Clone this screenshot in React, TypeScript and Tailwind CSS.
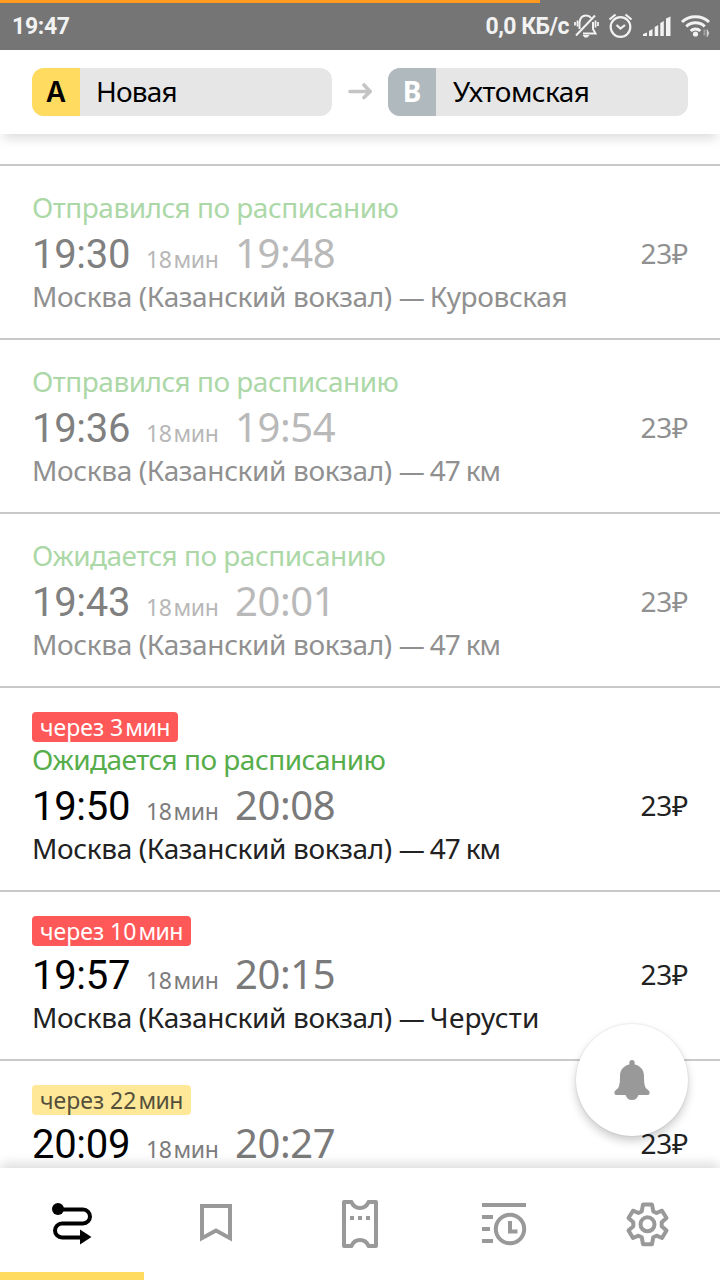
type Trip = {
  departure: string;
  arrival: string;
  from: string;
  to: string;
  toClass?: string;
  status?: string;
  minutesLeft?: number;
  urgent?: boolean;
  gone?: boolean;
};

const trips: Trip[] = [
  {
    departure: "19:30",
    arrival: "19:48",
    from: "Москва (Казанский вокзал)",
    to: "Куровская",
    status: "Отправился по расписанию",
    gone: true,
  },
  {
    departure: "19:36",
    arrival: "19:54",
    from: "Москва (Казанский вокзал)",
    to: "47 км",
    toClass: "tracking-[-1.1px]",
    status: "Отправился по расписанию",
    gone: true,
  },
  {
    departure: "19:43",
    arrival: "20:01",
    from: "Москва (Казанский вокзал)",
    to: "47 км",
    toClass: "tracking-[-1.1px]",
    status: "Ожидается по расписанию",
    gone: true,
  },
  {
    departure: "19:50",
    arrival: "20:08",
    from: "Москва (Казанский вокзал)",
    to: "47 км",
    toClass: "tracking-[-1.1px]",
    status: "Ожидается по расписанию",
    minutesLeft: 3,
    urgent: true,
  },
  {
    departure: "19:57",
    arrival: "20:15",
    from: "Москва (Казанский вокзал)",
    to: "Черусти",
    toClass: "tracking-[0.25px]",
    minutesLeft: 10,
    urgent: true,
  },
  {
    departure: "20:09",
    arrival: "20:27",
    from: "",
    to: "",
    minutesLeft: 22,
  },
];

function StatusBar() {
  return (
    <div className="relative flex h-[50px] shrink-0 items-center bg-[#757575] pl-3 pr-[9px] pt-[2px] font-['Roboto',sans-serif] text-[23px] font-bold text-[#f2f2f2]">
      <div className="absolute left-0 top-0 h-[3px] w-[540px] bg-[#ff9a1f]" />
      <span className="grow pt-[2px] tracking-[-0.3px]">19:47</span>
      <span className="pt-[2px] tracking-[-0.5px]">0,0 КБ/с</span>
      <svg className="ml-[5px] h-[26px] w-[26px] shrink-0" viewBox="0 0 26 26" fill="none" stroke="currentColor" strokeWidth="2">
        <path d="M5.500 16V9.500C6 5 8.500 2.500 12 2.500c2.200 0 4 .9 5.200 2.500M19 9v7l2.500 4.500H9" />
        <path d="M2 22.500 21 2.500" />
        <path d="M3.500 7.500v6M1 9v3.500M21.500 7.500v7M24 9v4" strokeWidth="1.800" />
        <path d="M8.500 22h7l-2 2.500h-3z" fill="currentColor" stroke="none" />
      </svg>
      <svg className="ml-2 h-[26px] w-[26px] shrink-0" viewBox="0 0 26 26" fill="none" stroke="currentColor" strokeWidth="2.200">
        <circle cx="12.500" cy="14" r="9.800" />
        <path d="m8.500 12 4 3.600 4.500-3.600M1.500 6.500 7.500 1.500M23.500 6.500l-6-5" />
      </svg>
      <svg className="ml-[9px] h-[22px] w-[29px] shrink-0" viewBox="0 0 29 22" fill="currentColor">
        <path d="M0 21v-2l4-1.500V21zM6 21v-5l3.500-2v7zM11.700 21v-9l3.500-2v11zM17.300 21V8l3.500-2v15zM23 21V3.500l4.500-2V21z" />
      </svg>
      <svg className="ml-[9px] h-[24px] w-[30px] shrink-0" viewBox="0 0 30 24" fill="none" stroke="currentColor" strokeWidth="3">
        <path d="M1 8c7-7 20-7 27 0M5.300 12.500c5-5 13.400-5 18.400 0M9.700 17c2.700-2.600 6.900-2.600 9.600 0" />
        <circle cx="14.500" cy="20" r="2.600" fill="currentColor" stroke="none" />
        <path d="M23.500 15.500v6" strokeWidth="2" opacity=".35" />
        <path d="M26 15.500v7.500l2-4z" fill="currentColor" strokeWidth=".5" opacity=".8" />
      </svg>
    </div>
  );
}

function Header() {
  return (
    <header className="z-10 flex h-[84px] shrink-0 items-center bg-white px-8 text-[28px] text-black shadow-[0_8px_10px_-3px_rgba(0,0,0,0.13)]">
      <div className="flex h-12 w-[300px] overflow-hidden rounded-[12px] bg-[#e6e6e6]">
        <div className="w-12 bg-[#ffdc5f] text-center font-['Inter',sans-serif] font-semibold leading-[49px]">A</div>
        <span className="pl-4 leading-[46px] tracking-[-0.8px]">Новая</span>
      </div>
      <svg className="mx-4 h-6 w-6" viewBox="0 0 24 24" fill="none" stroke="#c4c4c4" strokeWidth="3.600" strokeLinecap="round" strokeLinejoin="round">
        <path d="M2 11.500h20M16 5l6.200 6.500L16 17.500" />
      </svg>
      <div className="flex h-12 w-[300px] overflow-hidden rounded-[12px] bg-[#e6e6e6]">
        <div className="w-12 bg-[#afb9be] text-center font-bold leading-[46px] text-white">B</div>
        <span className="pl-[17px] leading-[46px] tracking-[-0.55px]">Ухтомская</span>
      </div>
    </header>
  );
}

function TripRow({ trip }: { trip: Trip }) {
  return (
    <li className={`border-t-2 border-[#c9c9c9] px-8 pb-6 pt-6 ${trip.gone ? "text-[#909090]" : "text-[#222]"}`}>
      {trip.minutesLeft && (
        <div className={`flex h-[30px] w-fit items-center whitespace-pre rounded-[4px] px-2 text-[23px] ${trip.urgent ? "bg-[#ff5858] text-white" : "bg-[#ffe999] text-[#55503c]"}`}>
          через {trip.minutesLeft}
          <span className="ml-[2px] tracking-[-0.5px]">мин</span>
        </div>
      )}
      {trip.status && (
        <p className={`h-[35px] text-[28px] leading-[35px] tracking-[-0.5px] ${trip.gone ? "text-[#acd8a7]" : "text-[#57ad4b]"}`}>{trip.status}</p>
      )}
      <div className="mt-[3px] flex h-[50px] items-baseline leading-[50px]">
        <span className={`w-[114px] font-['Roboto',sans-serif] text-[40px] tracking-[-0.3px] ${trip.gone ? "text-[#808080]" : "text-black"}`}>{trip.departure}</span>
        <span className={`w-[89px] text-[23px] tracking-[-0.4px] ${trip.gone ? "text-[#b7b7b7]" : "text-[#7c7c7c]"}`}>
          18<span className="ml-[2px]">мин</span>
        </span>
        <span className={`grow text-[40px] tracking-[-0.4px] ${trip.gone ? "text-[#b9b9b9]" : "text-[#7a7a7a]"}`}>{trip.arrival}</span>
        <span className="self-center text-[28px] tracking-[-0.3px]">23₽</span>
      </div>
      {trip.to && (
        <p className="h-9 whitespace-nowrap text-[28px] leading-9 tracking-[-0.37px]">
          {trip.from} <span className="text-[26px] tracking-[-1.800px]">—</span> <span className={trip.toClass}>{trip.to}</span>
        </p>
      )}
    </li>
  );
}

function TabBar() {
  return (
    <nav className="z-10 grid h-[112px] shrink-0 grid-cols-5 bg-white text-[#999] shadow-[0_-6px_10px_-1px_rgba(0,0,0,0.13)]">
      <button className="flex items-center justify-center border-b-8 border-[#ffdc5f] pt-2 text-black">
        <svg className="h-12 w-12" viewBox="0 0 48 48" fill="none" stroke="currentColor" strokeWidth="4">
          <path d="M10 9.500h25a7 7 0 0 1 0 14H14a7 7 0 0 0 0 14h20" />
          <circle cx="10" cy="9" r="6" fill="currentColor" stroke="none" />
          <path d="M32 29.500v15L43.500 37z" fill="currentColor" stroke="none" />
        </svg>
      </button>
      <button className="flex items-center justify-center">
        <svg className="h-12 w-12" viewBox="0 0 48 48" fill="none" stroke="currentColor" strokeWidth="4">
          <path d="M10 6h28v32.200L24 30.500 10 38.200z" />
        </svg>
      </button>
      <button className="flex items-center justify-center">
        <svg className="h-12 w-12" viewBox="0 0 48 48" fill="none" stroke="currentColor" strokeWidth="4" strokeLinejoin="round">
          <path d="M8 2h7.500c1.500 4 4.500 6 8.500 6s7-2 8.500-6H40v44h-7.500c-1.500-4-4.500-6-8.500-6s-7 2-8.500 6H8z" />
          <path d="M14 18h4M22 18h4M30 18h4" />
        </svg>
      </button>
      <button className="flex items-center justify-center">
        <svg className="h-12 w-12" viewBox="0 0 48 48" fill="none" stroke="currentColor" strokeWidth="4">
          <path d="M2 5h44M2 17h11M2 29h8M2 41h11" />
          <circle cx="30" cy="29" r="14.200" />
          <path d="M30 21v10.500h7.500" />
        </svg>
      </button>
      <button className="flex items-center justify-center">
        <svg className="h-12 w-12" viewBox="0 0 48 48" fill="none" stroke="currentColor" strokeWidth="4" strokeLinejoin="round">
          <path d="M19 4.500h9l1.300 7 3.200 1.500 5.500-2.300 4.500 7.300-4.800 4.300v4L42.500 30.500 38 38l-5.500-2.300-3.200 1.500-1.300 7h-9l-1.300-7-3.200-1.500L9 38 4.500 30.500l4.800-4.200v-4L4.500 18 9 10.700l5.500 2.300 3.200-1.500z" />
          <circle cx="23.500" cy="24.300" r="7" />
        </svg>
      </button>
    </nav>
  );
}

export default function App() {
  return (
    <div className="relative flex h-[1280px] w-[720px] flex-col overflow-hidden bg-white font-['Noto_Sans',sans-serif]">
      <StatusBar />
      <Header />
      <ul className="min-h-0 grow overflow-hidden pt-[30px]">
        {trips.map((trip) => (
          <TripRow key={trip.departure} trip={trip} />
        ))}
      </ul>
      <button className="absolute bottom-[144px] right-8 flex h-28 w-28 items-center justify-center rounded-full bg-white text-[#999] shadow-[0_5px_10px_rgba(0,0,0,0.2),0_0_2px_rgba(0,0,0,0.15)]">
        <svg className="h-10 w-9" viewBox="0 0 36 40" fill="currentColor">
          <path d="M18 0c1.700 0 2.700 1.200 2.700 2.800v1.700C26.500 5.800 30 10 30 16c0 8 .6 11.500 3.500 13.500C35.200 30.700 36 32 35.500 33.500c-.3 1-1.200 1.500-2.500 1.500h-8.500c-1 3-3.200 5-6.500 5s-5.500-2-6.500-5H3c-1.300 0-2.200-.5-2.500-1.500C0 32 .8 30.700 2.500 29.500 5.400 27.500 6 24 6 16 6 10 9.500 5.800 15.300 4.500V2.800C15.300 1.200 16.300 0 18 0z" />
        </svg>
      </button>
      <TabBar />
    </div>
  );
}
